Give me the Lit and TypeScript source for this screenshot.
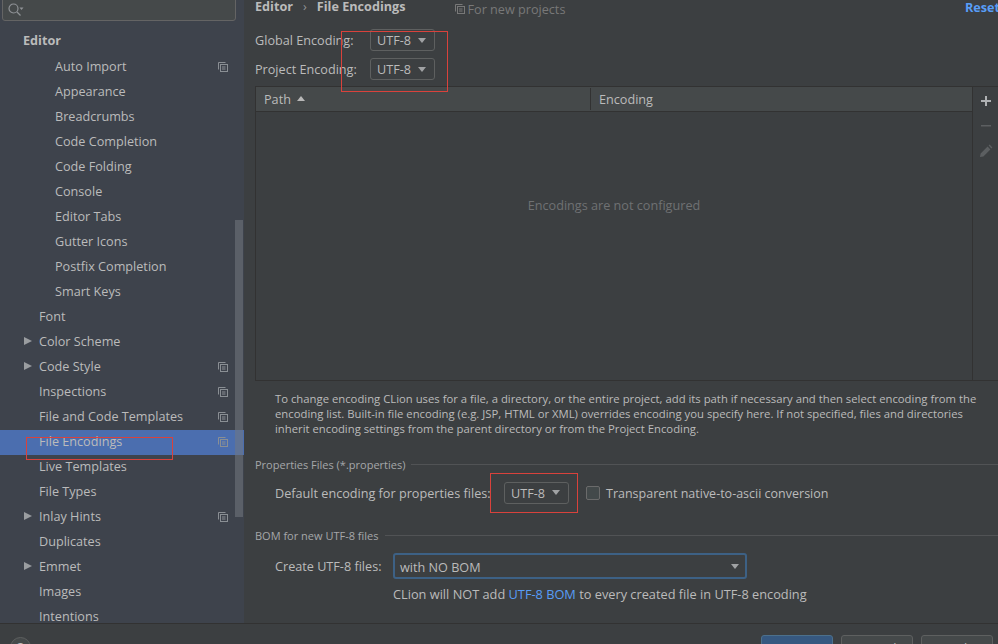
import { LitElement, css, html, svg } from "lit";
import { customElement } from "lit/decorators.js";

type NavItem = { label: string; indent: 0 | 1; arrow?: boolean; copy?: boolean; selected?: boolean };

const NAV: NavItem[] = [
  { label: "Auto Import", indent: 1, copy: true },
  { label: "Appearance", indent: 1 },
  { label: "Breadcrumbs", indent: 1 },
  { label: "Code Completion", indent: 1 },
  { label: "Code Folding", indent: 1 },
  { label: "Console", indent: 1 },
  { label: "Editor Tabs", indent: 1 },
  { label: "Gutter Icons", indent: 1 },
  { label: "Postfix Completion", indent: 1 },
  { label: "Smart Keys", indent: 1 },
  { label: "Font", indent: 0 },
  { label: "Color Scheme", indent: 0, arrow: true },
  { label: "Code Style", indent: 0, arrow: true, copy: true },
  { label: "Inspections", indent: 0, copy: true },
  { label: "File and Code Templates", indent: 0, copy: true },
  { label: "File Encodings", indent: 0, copy: true, selected: true },
  { label: "Live Templates", indent: 0 },
  { label: "File Types", indent: 0 },
  { label: "Inlay Hints", indent: 0, arrow: true, copy: true },
  { label: "Duplicates", indent: 0 },
  { label: "Emmet", indent: 0, arrow: true },
  { label: "Images", indent: 0 },
  { label: "Intentions", indent: 0 },
];

const copyIcon = svg`<svg class="copy" width="10" height="10" viewBox="0 0 10 10" fill="none" stroke="#8a8f94" stroke-width="1">
  <path d="M.5 7.5V.5h7"/><rect x="2.5" y="2.5" width="7" height="7"/><path d="M4 5h3.5M4 7h3.5" />
</svg>`;

@customElement("app-root")
export class AppRoot extends LitElement {
  static styles = css`
    :host {
      display: block;
      position: relative;
      width: 998px;
      height: 644px;
      overflow: hidden;
      background: #3c3f41;
      color: #bbbbbb;
      font-family: "Open Sans", "Noto Sans", sans-serif;
      font-size: 12.65px;
    }
    .top {
      display: flex;
      height: 623px;
      border-bottom: 1px solid #323232;
    }
    .side {
      width: 244px;
      flex: none;
      height: 623px;
      overflow: hidden;
      position: relative;
      background: #3e434c;
    }
    .search {
      margin: -8px 0 0 2px;
      width: 234px;
      height: 29px;
      box-sizing: border-box;
      background: #45494a;
      border: 1px solid #646464;
      border-radius: 3px;
      display: flex;
      align-items: flex-end;
      padding: 0 0 3px 5px;
    }
    .group {
      height: 34px;
      box-sizing: border-box;
      padding: 3px 0 0 23px;
      display: flex;
      align-items: center;
      font-weight: 700;
    }
    .row {
      height: 25px;
      box-sizing: border-box;
      padding: 0 0 3px 39px;
      display: flex;
      align-items: center;
      position: relative;
    }
    .row.deep {
      padding-left: 55px;
    }
    .row.selected {
      background: #4b6eaf;
    }
    .arrow {
      position: absolute;
      left: 24px;
      top: 7px;
      width: 0;
      height: 0;
      border-left: 8px solid #9a9da0;
      border-top: 4.5px solid transparent;
      border-bottom: 4.5px solid transparent;
    }
    .copy {
      position: absolute;
      left: 218px;
      top: 7px;
    }
    .thumb {
      position: absolute;
      left: 235px;
      top: 220px;
      width: 8px;
      height: 297px;
      background: rgba(115, 120, 128, 0.55);
    }
    .main {
      flex: 1;
      min-width: 0;
      padding-left: 11px;
      display: flex;
      flex-direction: column;
    }
    .head {
      display: flex;
      height: 32px;
      margin-top: -3px;
      align-items: flex-start;
      line-height: 18px;
      flex: none;
    }
    .crumb {
      font-weight: 700;
    }
    .sep {
      margin: 0 10px;
      color: #8f9296;
    }
    .scope {
      margin-left: 49px;
      padding-top: 3px;
      display: flex;
      align-items: center;
      gap: 3px;
      color: #787878;
    }
    .reset {
      margin-left: auto;
      color: #589df6;
      font-weight: 700;
      padding-top: 1px;
      width: 33px;
      overflow: hidden;
    }
    .enc-row {
      display: flex;
      align-items: center;
      height: 22px;
      margin-bottom: 7px;
      flex: none;
    }
    .enc-row .name {
      width: 115px;
    }
    .combo {
      height: 22px;
      box-sizing: border-box;
      width: 65px;
      border: 1px solid #5e6060;
      border-radius: 3px;
      display: flex;
      align-items: center;
      justify-content: space-between;
      padding: 0 8px 0 6px;
      flex: none;
    }
    .tri {
      width: 0;
      height: 0;
      border-top: 5px solid #a0a2a4;
      border-left: 4.5px solid transparent;
      border-right: 4.5px solid transparent;
    }
    .table-wrap {
      display: flex;
      height: 295px;
      margin-top: -1px;
      border: 1px solid #323232;
      border-right: 0;
      box-sizing: border-box;
      flex: none;
    }
    .table {
      flex: 1;
      display: flex;
      flex-direction: column;
      border-right: 1px solid #323232;
    }
    .thead {
      height: 24px;
      background: #45494a;
      border-bottom: 1px solid #323232;
      display: flex;
      align-items: center;
      flex: none;
    }
    .th-path {
      width: 335px;
      box-sizing: border-box;
      padding-left: 8px;
      display: flex;
      align-items: center;
      gap: 6px;
      border-right: 1px solid #323232;
      height: 22px;
      flex: none;
    }
    .th-enc {
      padding-left: 8px;
    }
    .sort {
      width: 0;
      height: 0;
      border-bottom: 5px solid #b8b8b8;
      border-left: 4.5px solid transparent;
      border-right: 4.5px solid transparent;
      margin-bottom: 2px;
    }
    .empty {
      flex: 1;
      display: flex;
      align-items: center;
      justify-content: center;
      color: #6f7173;
      padding-bottom: 83px;
    }
    .tools {
      width: 25px;
      flex: none;
      display: flex;
      flex-direction: column;
      align-items: center;
      padding-top: 1px;
    }
    .tool {
      height: 25px;
      display: flex;
      align-items: center;
      justify-content: center;
    }
    .info {
      margin: 10px 10px 0 20px;
      font-size: 11.3px;
      line-height: 15px;
      height: 64px;
      white-space: nowrap;
      flex: none;
    }
    .legend {
      display: flex;
      align-items: center;
      gap: 6px;
      height: 18px;
      font-size: 11px;
      color: #a5a7a9;
      flex: none;
    }
    .legend::after {
      content: "";
      flex: 1;
      border-top: 1px solid #515355;
    }
    .legend.second {
      margin-top: 22px;
    }
    .prop-row {
      display: flex;
      align-items: center;
      height: 22px;
      margin: 8px 0 0 20px;
      padding-top: 1px;
      flex: none;
    }
    .prop-row .name {
      width: 229px;
      flex: none;
    }
    .prop-row .combo {
      margin-top: -1px;
    }
    .check {
      width: 14px;
      height: 14px;
      box-sizing: border-box;
      border: 1px solid #6b6b6b;
      border-radius: 2px;
      background: #43494a;
      margin: 0 6px 0 17px;
      flex: none;
    }
    .check-label {
      font-size: 12.5px;
    }
    .bom {
      margin: 0 0 0 20px;
    }
    .bom-row {
      display: flex;
      align-items: center;
      margin-top: 9px;
      height: 26px;
    }
    .bom-row .name {
      width: 118px;
      flex: none;
    }
    .select {
      width: 354px;
      height: 26px;
      box-sizing: border-box;
      border: 2px solid #3d6185;
      border-radius: 3px;
      display: flex;
      align-items: center;
      justify-content: space-between;
      padding: 1px 6px 0 5px;
    }
    .hint {
      margin: 6px 0 0 118px;
      white-space: nowrap;
      font-size: 12.77px;
    }
    a {
      color: #589df6;
      text-decoration: none;
    }
    .foot {
      display: flex;
      justify-content: flex-end;
      gap: 8px;
      padding: 11px 5px 0 0;
      position: relative;
    }
    .btn {
      width: 72px;
      height: 26px;
      box-sizing: border-box;
      border: 1px solid #5e6060;
      border-radius: 3px;
      background: #45494a;
      text-align: center;
      line-height: 24px;
    }
    .btn.ok {
      background: #365880;
      border-color: #4c708c;
      font-weight: 700;
    }
    .help {
      position: absolute;
      left: 10px;
      top: 13px;
      width: 21px;
      height: 21px;
      box-sizing: border-box;
      border-radius: 50%;
      background: #45494a;
      border: 1px solid #5e6060;
      text-align: center;
      line-height: 19px;
      font-size: 12px;
      font-weight: 700;
    }
    .mark {
      position: absolute;
      box-sizing: border-box;
      border: 1px solid #d9423c;
      pointer-events: none;
    }
    .m1 {
      left: 341px;
      top: 31px;
      width: 107px;
      height: 61px;
    }
    .m2 {
      left: 26px;
      top: 437px;
      width: 147px;
      height: 23px;
    }
    .m3 {
      left: 490px;
      top: 473px;
      width: 88px;
      height: 40px;
    }
  `;

  private renderRow(item: NavItem) {
    const cls = `row ${item.indent ? "deep" : ""} ${item.selected ? "selected" : ""}`;
    return html`<div class=${cls}>
      ${item.arrow ? html`<span class="arrow"></span>` : null}
      <span>${item.label}</span>
      ${item.copy ? copyIcon : null}
    </div>`;
  }

  private renderCombo() {
    return html`<div class="combo"><span>UTF-8</span><span class="tri"></span></div>`;
  }

  render() {
    return html`
      <div class="top">
        <aside class="side">
          <div class="search">
            <svg width="16" height="14" viewBox="0 0 16 14" fill="none" stroke="#8f9296" stroke-width="1.2">
              <circle cx="5.5" cy="5.5" r="4.5" />
              <path d="M9 9l3.5 3.5" />
              <path d="M11.5 4.5h4l-2 2.5z" fill="#8f9296" stroke="none" />
            </svg>
          </div>
          <div class="group">Editor</div>
          ${NAV.map((item) => this.renderRow(item))}
          <div class="thumb"></div>
        </aside>
        <main class="main">
          <div class="head">
            <span class="crumb">Editor</span>
            <span class="sep">›</span>
            <span class="crumb">File Encodings</span>
            <span class="scope">
              <svg width="10" height="10" viewBox="0 0 10 10" fill="none" stroke="#787878" stroke-width="1">
                <path d="M.5 7.5V.5h7" /><rect x="2.5" y="2.5" width="7" height="7" /><path d="M4 5h3.5M4 7h3.5" />
              </svg>
              For new projects
            </span>
            <span class="reset">Reset</span>
          </div>
          <div class="enc-row"><span class="name">Global Encoding:</span>${this.renderCombo()}</div>
          <div class="enc-row"><span class="name">Project Encoding:</span>${this.renderCombo()}</div>
          <div class="table-wrap">
            <div class="table">
              <div class="thead">
                <div class="th-path">Path <span class="sort"></span></div>
                <div class="th-enc">Encoding</div>
              </div>
              <div class="empty">Encodings are not configured</div>
            </div>
            <div class="tools">
              <div class="tool"><svg width="12" height="12" viewBox="0 0 12 12"><path d="M5 1h2v4h4v2H7v4H5V7H1V5h4z" fill="#afb1b3" /></svg></div>
              <div class="tool"><svg width="12" height="12" viewBox="0 0 12 12"><path d="M1 5h10v1.5H1z" fill="#5c5f61" /></svg></div>
              <div class="tool"><svg width="14" height="14" viewBox="0 0 14 14"><path d="M1 13l.6-3.4 7-7 2.8 2.8-7 7zM9.6 1.6l1-1 2.8 2.8-1 1z" fill="#5c5f61" /></svg></div>
            </div>
          </div>
          <div class="info">
            To change encoding CLion uses for a file, a directory, or the entire project, add its path if necessary and then select encoding from the<br />
            encoding list. Built-in file encoding (e.g. JSP, HTML or XML) overrides encoding you specify here. If not specified, files and directories<br />
            inherit encoding settings from the parent directory or from the Project Encoding.
          </div>
          <div class="legend">Properties Files (*.properties)</div>
          <div class="prop-row">
            <span class="name">Default encoding for properties files:</span>
            ${this.renderCombo()}
            <span class="check"></span>
            <span class="check-label">Transparent native-to-ascii conversion</span>
          </div>
          <div class="legend second">BOM for new UTF-8 files</div>
          <div class="bom">
            <div class="bom-row">
              <span class="name">Create UTF-8 files:</span>
              <div class="select"><span>with NO BOM</span><span class="tri"></span></div>
            </div>
            <div class="hint">CLion will NOT add <a>UTF-8 BOM</a> to every created file in UTF-8 encoding</div>
          </div>
        </main>
      </div>
      <footer class="foot">
        <div class="help">?</div>
        <div class="btn ok">OK</div>
        <div class="btn">Cancel</div>
        <div class="btn">Apply</div>
      </footer>
      <div class="mark m1"></div>
      <div class="mark m2"></div>
      <div class="mark m3"></div>
    `;
  }
}
